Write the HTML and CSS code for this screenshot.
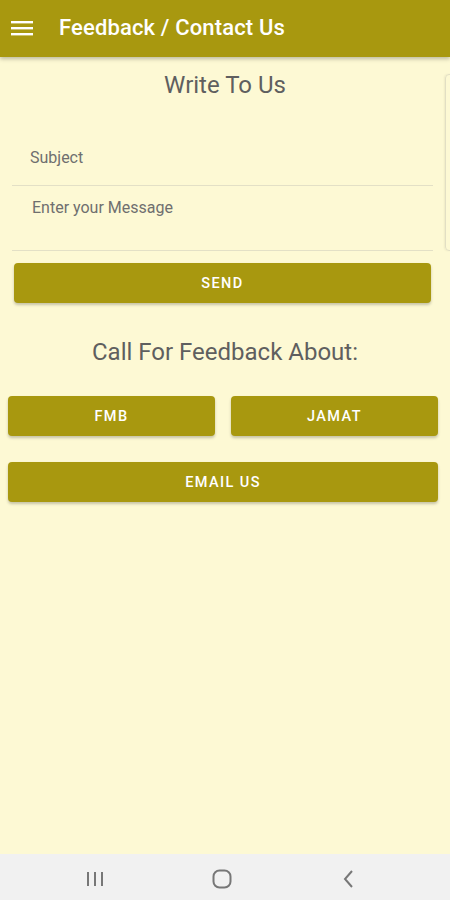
FILE: index.html
```html
<!DOCTYPE html>
<html>
<head>
<meta charset="utf-8">
<link rel="stylesheet" href="styles.css">
</head>
<body>
<div class="screen">
  <header class="appbar">
    <svg class="menu" width="22" height="16" viewBox="0 0 22 16"><rect x="0" y="1" width="22" height="2.4" fill="#fff"/><rect x="0" y="7" width="22" height="2.4" fill="#fff"/><rect x="0" y="13" width="22" height="2.4" fill="#fff"/></svg>
    <h1 class="title">Feedback / Contact Us</h1>
  </header>
  <main class="content">
    <div class="edge-card"></div>
    <h2 class="heading">Write To Us</h2>
    <div class="field subject">Subject</div>
    <div class="field message">Enter your Message</div>
    <div class="send-wrap"><button class="btn">SEND</button></div>
    <h2 class="heading call">Call For Feedback About:</h2>
    <div class="row">
      <button class="btn">FMB</button>
      <button class="btn">JAMAT</button>
    </div>
    <div class="email-wrap"><button class="btn">EMAIL US</button></div>
  </main>
  <nav class="navbar">
    <span class="slot"><svg width="20" height="20" viewBox="0 0 20 20"><rect x="2" y="3" width="2" height="14" fill="#777"/><rect x="9" y="3" width="2" height="14" fill="#777"/><rect x="16" y="3" width="2" height="14" fill="#777"/></svg></span>
    <span class="slot"><svg width="22" height="22" viewBox="0 0 22 22"><rect x="2.5" y="2.5" width="17" height="17" rx="6" fill="none" stroke="#777" stroke-width="2"/></svg></span>
    <span class="slot"><svg width="20" height="20" viewBox="0 0 20 20"><path d="M13 2 L6 10 L13 18" fill="none" stroke="#777" stroke-width="2"/></svg></span>
  </nav>
</div>
</body>
</html>
```
FILE: styles.css
```css
* { box-sizing: border-box; }
html, body { margin: 0; padding: 0; }
body { font-family: Roboto, "Noto Sans", sans-serif; background: #fdf9d4; }
.screen { width: 450px; height: 900px; display: flex; flex-direction: column; position: relative; overflow: hidden; }
.appbar { height: 57px; background: #a8980f; display: flex; align-items: center; padding-left: 11px; box-shadow: 0 2px 4px rgba(0,0,0,0.25); position: relative; z-index: 2; }
.menu { margin-top: -2px; }
.title { margin: -3px 0 0 26px; color: #fff; font-size: 22px; font-weight: 500; letter-spacing: 0.15px; }
.content { flex: 1; position: relative; display: flex; flex-direction: column; background: #fdf9d4; }
.edge-card { position: absolute; left: 445px; top: 17px; width: 20px; height: 177px; border: 1px solid #e2dfc4; border-radius: 4px; box-shadow: -1px 0 2px rgba(0,0,0,0.06); }
.heading { margin: 0; text-align: center; font-weight: 400; color: #5f5f5f; font-size: 24px; }
.heading:first-of-type { margin-top: 14px; }
.field { margin: 0 17px 0 12px; border-bottom: 1px solid #e3e0c6; color: #6f6f6f; font-size: 16px; }
.subject { margin-top: 45px; padding: 4px 0 18px 18px; }
.message { padding: 12px 0 33px 20px; }
.send-wrap { padding: 12px 19px 0 14px; }
.btn { width: 100%; height: 40px; border: none; border-radius: 4px; background: #a8980f; color: #fff; font-family: Roboto, sans-serif; font-weight: 500; font-size: 14.5px; letter-spacing: 1.4px; box-shadow: 0 2px 3px rgba(0,0,0,0.22); }
.call { margin-top: 35px; }
.row { display: flex; gap: 16px; padding: 30px 12px 0 8px; }
.email-wrap { padding: 26px 12px 0 8px; }
.navbar { height: 46px; background: #f1f1f1; display: flex; align-items: center; gap: 87px; padding: 4px 0 0 75px; }
.slot { width: 40px; display: flex; justify-content: center; align-items: center; }
```
